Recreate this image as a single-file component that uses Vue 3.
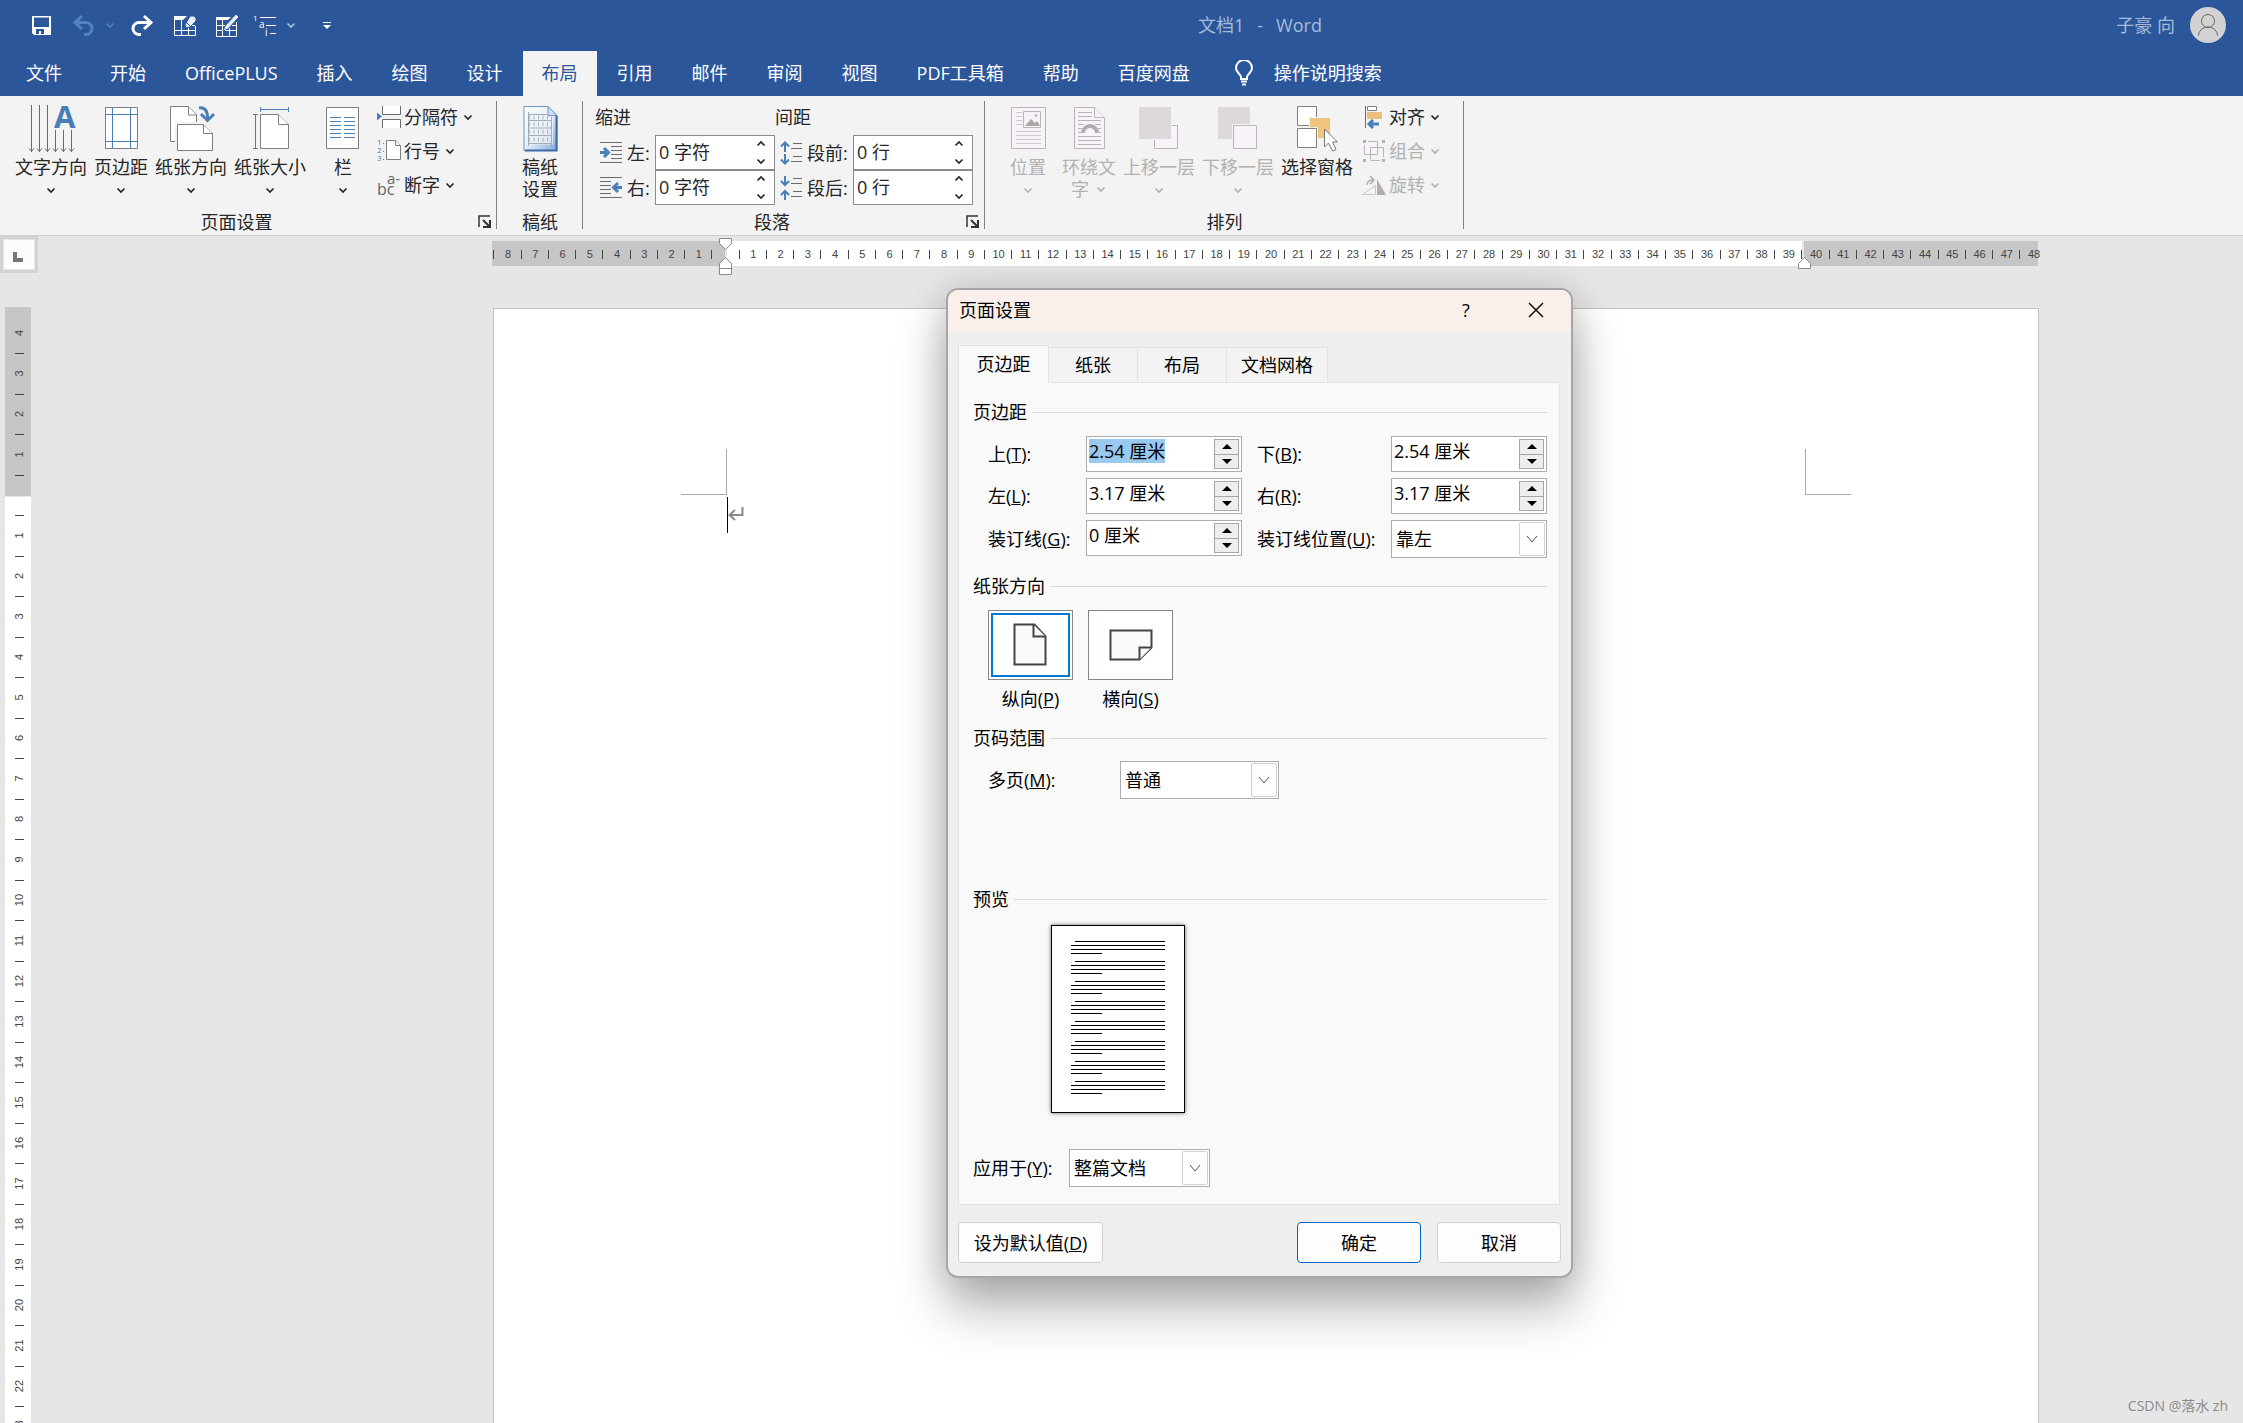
<script setup>
import { onMounted, ref } from 'vue'

const menuTabs = ['开始', 'OfficePLUS', '插入', '绘图', '设计', '布局', '引用', '邮件', '审阅', '视图', 'PDF工具箱', '帮助', '百度网盘']
const activeMenu = ref('布局')

const quickTools = [
  { icon: 'save', label: '保存', w: 24 },
  { icon: 'undo', label: '撤消', w: 24, dim: true },
  { icon: 'chev', label: '撤消列表', w: 12, dim: true },
  { icon: 'redo', label: '恢复', w: 24 },
  { icon: 'erase', label: '橡皮擦', w: 24 },
  { icon: 'pen', label: '绘制表格', w: 24 },
  { icon: 'list', label: '多级列表', w: 24 },
  { icon: 'chev', label: '列表选项', w: 12, soft: true },
  { icon: 'custom', label: '自定义', w: 12 }
]

// characters that are part of an icon: position, size, colour
const glyphs = {
  list: [
    { x: 0, y: 8, s: 8, c: '#fff', t: '1' },
    { x: 6, y: 15, s: 10, c: '#fff', t: 'a' },
    { x: 12, y: 23, s: 10, c: '#fff', t: 'i' }
  ],
  textdir: [{ x: 30, y: 28, s: 31, c: '#4a7fb5', t: 'A', w: 700 }],
  lines: [
    { x: 0, y: 6, s: 8, c: '#4a7fb5', t: '1' },
    { x: 0, y: 14, s: 8, c: '#4a7fb5', t: '2' },
    { x: 0, y: 22, s: 8, c: '#4a7fb5', t: '3' }
  ],
  hyphen: [
    { x: 0, y: 22, s: 16, c: '#666', t: 'bc' },
    { x: 10, y: 11, s: 15, c: '#666', t: 'a-' }
  ]
}

const pageButtons = [
  { icon: 'textdir', label: '文字方向' },
  { icon: 'margins', label: '页边距' },
  { icon: 'orient', label: '纸张方向' },
  { icon: 'size', label: '纸张大小' },
  { icon: 'columns', label: '栏', narrow: true }
]
const pageSmall = [
  { icon: 'breaks', label: '分隔符' },
  { icon: 'lines', label: '行号' },
  { icon: 'hyphen', label: '断字' }
]
const arrangeSmall = [
  { icon: 'align', label: '对齐' },
  { icon: 'group', label: '组合', off: true },
  { icon: 'rotate', label: '旋转', off: true }
]
const indent = [
  { id: 'ind-l', icon: 'indl', label: '左:', value: '0 字符' },
  { id: 'sp-b', icon: 'spb', label: '段前:', value: '0 行' },
  { id: 'ind-r', icon: 'indr', label: '右:', value: '0 字符' },
  { id: 'sp-a', icon: 'spa', label: '段后:', value: '0 行' }
]

const H_ORIGIN = 234
const H_UNIT = 1308 / 48
const hMarks = []
for (let i = -8; i <= 48; i++) {
  if (i !== 0) hMarks.push({ n: Math.abs(i), x: H_ORIGIN + i * H_UNIT })
}
const hTicks = []
for (let i = -9; i < 48; i++) {
  hTicks.push(Math.round(H_ORIGIN + (i + 0.5) * H_UNIT - 1))
}
const V_ORIGIN = 188
const V_UNIT = 81 / 2
const vMarks = []
for (let i = -4; i <= 23; i++) {
  if (i !== 0) vMarks.push({ n: Math.abs(i), y: V_ORIGIN + i * V_UNIT })
}
const vTicks = []
for (let i = -4; i < 23; i++) {
  vTicks.push(Math.round(V_ORIGIN + (i + 0.5) * V_UNIT))
}

const dialogTabs = ['页边距', '纸张', '布局', '文档网格']
const activeTab = ref('页边距')
const margins = [
  { id: 'm-top', label: '上', key: 'T', value: '2.54 厘米' },
  { id: 'm-bottom', label: '下', key: 'B', value: '2.54 厘米' },
  { id: 'm-left', label: '左', key: 'L', value: '3.17 厘米' },
  { id: 'm-right', label: '右', key: 'R', value: '3.17 厘米' },
  { id: 'm-gutter', label: '装订线', key: 'G', value: '0 厘米' }
]
const orientation = ref('portrait')

onMounted(() => {
  const first = document.getElementById('m-top')
  first.focus({ preventScroll: true })
  first.select()
})
</script>

<template>
  <div class="app">
    <svg class="defs" aria-hidden="true">
      <defs>
        <linearGradient id="sheet" x1="0" y1="0" x2="1" y2="1">
          <stop offset="0" stop-color="#fff" />
          <stop offset="0.5" stop-color="#e6eef9" />
          <stop offset="1" stop-color="#7ea6dc" />
        </linearGradient>
      </defs>
      <symbol id="i-chev" viewBox="0 0 12 12"><path d="M2.500 4.500L6 8l3.500-3.500" fill="none" stroke="currentColor" stroke-width="1.700" /></symbol>
      <symbol id="i-save" viewBox="0 0 24 24"><path fill-rule="evenodd" fill="#fff" d="M3 3h19v19H5l-2-2zM5 4.500v9.500h15V4.500zM7 16v5h3v-3h2v3h3v-5z" /></symbol>
      <symbol id="i-undo" viewBox="0 0 24 24"><path d="M4 9.500h11a6 6 0 0 1 0 12h-2M11 3l-7 6.500 7 6.500" fill="none" stroke="#5283c4" stroke-width="3" /></symbol>
      <symbol id="i-redo" viewBox="0 0 24 24"><path d="M21 9.500H9a6 6 0 0 0 0 12h2M14 3l7 6.500-7 6.500" fill="none" stroke="#fff" stroke-width="3" /></symbol>
      <symbol id="i-erase" viewBox="0 0 24 24">
        <path d="M1 3h13l-4 4H1z" fill="#fff" />
        <path d="M1.500 3v19.500h21V13M1 17.500h21M8.500 7v15M15.500 14v8M15 12.500h7" fill="none" stroke="#fff" />
        <path d="M17 3h4l2 2v3l-6 6-4 1-1-3z" fill="#e8eef8" stroke="#2b579a" />
        <path d="M13 9l4 4" stroke="#2b579a" />
      </symbol>
      <symbol id="i-pen" viewBox="0 0 24 24">
        <path d="M1 4h15l-3 3H1z" fill="#fff" />
        <path d="M1.500 4v19.500h20V9M1 12.500h9M1 17.500h20M7.500 7v16M14.500 15v8M17 12.500h4" fill="none" stroke="#fff" />
        <path d="M21 1l3 3L13 16l-5 2 2-5z" fill="#e8eef8" stroke="#2b579a" />
      </symbol>
      <symbol id="i-list" viewBox="0 0 24 24"><path d="M7 4.500h16M13 12.500h10M17 20.500h6" stroke="#fff" /></symbol>
      <symbol id="i-custom" viewBox="0 0 12 12"><path d="M2 3.500h8" stroke="#fff" /><path d="M2 6h8l-4 4z" fill="#fff" /></symbol>
      <symbol id="i-user" viewBox="0 0 36 36">
        <circle cx="18" cy="18" r="18" fill="#d2d2d2" />
        <circle cx="18" cy="14" r="6.500" fill="none" stroke="#666" />
        <path d="M8.500 28.500a9.500 8.500 0 0 1 19 0" fill="none" stroke="#666" />
      </symbol>
      <symbol id="i-bulb" viewBox="0 0 20 26">
        <path d="M7 19v-2c0-3-5-4-5-9a8 8 0 0 1 16 0c0 5-5 6-5 9v2z" fill="none" stroke="#fff" stroke-width="2" />
        <path d="M7 21.500h6M8 24.500h4" stroke="#fff" stroke-width="2" />
      </symbol>

      <symbol id="i-textdir" viewBox="0 0 54 56">
        <path class="g" d="M7.500 5v47M15.500 5v47M23.500 5v47M31.500 30v22M39.500 30v22M47.500 30v22" />
        <path class="g" d="M5 48.500l2.500 3 2.500-3M13 48.500l2.500 3 2.500-3M21 48.500l2.500 3 2.500-3M29 48.500l2.500 3 2.500-3M37 48.500l2.500 3 2.500-3M45 48.500l2.500 3 2.500-3" />
      </symbol>
      <symbol id="i-margins" viewBox="0 0 54 56">
        <path class="p" d="M11.500 7.500h32v41h-32z" />
        <path class="b" d="M18.500 8v40M36.500 8v40M12 14.500h31M12 41.500h31" />
      </symbol>
      <symbol id="i-orient" viewBox="0 0 54 56">
        <path class="p" d="M6.500 6.500h18l8 8v27h-26z" />
        <path class="p" d="M24.500 6.500v8.500h8" />
        <path d="M11 22h40v34H11z" fill="#f3f3f3" />
        <path class="p" d="M13.500 24.500h26l9 9v17h-35z" />
        <path class="p" d="M39.500 24.500v9h9" />
        <path d="M35 8c6-1 9 3 8.500 12M37 14l6.500 6.500L50 14" fill="none" stroke="#4a7fb5" stroke-width="3" />
      </symbol>
      <symbol id="i-size" viewBox="0 0 54 56">
        <path class="p" d="M17.500 14.500h18l10 10v24h-28z" />
        <path class="p" d="M35.500 14.500v10h10" />
        <path class="b" d="M17.500 9.500h28M17.500 7v5M45.500 7v5M12.500 14.500v34M10 14.500h5M10 48.500h5" />
      </symbol>
      <symbol id="i-columns" viewBox="0 0 54 56">
        <path class="p" d="M10.500 7.500h32v41h-32z" />
        <path class="b" d="M14 17.500h11M28 17.500h11M14 21.500h11M28 21.500h11M14 25.500h11M28 25.500h11M14 29.500h11M28 29.500h11M14 33.500h11M28 33.500h11M14 37.500h11M28 37.500h11" />
      </symbol>
      <symbol id="i-manuscript" viewBox="0 0 54 56">
        <path d="M11 6.500h24l9 9v35H11z" fill="url(#sheet)" stroke="#7393c4" />
        <path d="M43.500 16v34.500H12" fill="none" stroke="#3f68a8" stroke-width="2" />
        <path d="M35 6.500v9h9z" fill="#cfe0f5" stroke="#7393c4" />
        <path d="M14 11.500h20v6h6v27H14z" fill="#f1f3f7" opacity=".7" />
        <path d="M15.500 12v34M38.500 17v29M15 14.500h20M15 20.500h24M15 28h24M15 35.500h24M15 43.500h24" stroke="#a3acba" />
        <path d="M16 17.500h22M16 24.300h22M16 31.800h22M16 39.500h22" stroke="#a9b2bf" stroke-width="4" stroke-dasharray="1 3.500" />
      </symbol>
      <symbol id="i-breaks" viewBox="0 0 24 24">
        <path class="w" d="M6 1v8h18V1zM6 23v-9h18v9z" />
        <path class="g" d="M5.500 1v8.500h18V1M5.500 23v-8.500h18V23" />
        <path d="M0 7.500l5 4-5 4z" fill="#4a7fb5" />
      </symbol>
      <symbol id="i-lines" viewBox="0 0 24 24">
        <path class="p" d="M9.500 1.500h9l5 5v14h-14z" /><path class="p" d="M18.500 1.500v5h5" />
        <path d="M6 4.500h1M6 12.500h1M6 20.500h1" stroke="#4a7fb5" />
      </symbol>
      <symbol id="i-hyphen" viewBox="0 0 24 24"></symbol>
      <symbol id="i-indl" viewBox="0 0 24 24">
        <path class="g" d="M1 1.500h22M12 5.500h11M12 9.500h11M12 13.500h11M12 17.500h11M1 21.500h22" />
        <path class="ba" d="M1 11.500h8M5 7l4.500 4.500L5 16" />
      </symbol>
      <symbol id="i-indr" viewBox="0 0 24 24">
        <path class="g" d="M1 1.500h22M1 5.500h11M1 9.500h11M1 13.500h11M1 17.500h11M1 21.500h22" />
        <path class="ba" d="M23 11.500h-8M19 7l-4.500 4.500L19 16" />
      </symbol>
      <symbol id="i-spb" viewBox="0 0 24 24">
        <path class="g" d="M14 2.500h9M12 7.500h11M14 15.500h9M12 20.500h11" />
        <path class="bt" d="M6 11V1.500M2 5.500l4-4 4 4M6 13v9.500M2 18.500l4 4 4-4" />
      </symbol>
      <symbol id="i-spa" viewBox="0 0 24 24">
        <path class="g" d="M14 2.500h9M12 7.500h11M14 15.500h9M12 20.500h11" />
        <path class="bt" d="M6 0v9M2 5l4 4 4-4M6 24v-9M2 19l4-4 4 4" />
      </symbol>

      <symbol id="i-position" viewBox="0 0 54 56">
        <path class="d" d="M10.500 7.500h34v41h-34z" />
        <path class="dl" d="M15 12.500h6M15 16.500h6M15 20.500h6M15 24.500h6M15 31.500h25M15 35.500h25M15 39.500h25M15 43.500h25" />
        <path class="d" d="M22.500 11.500h17v16h-17z" />
        <path d="M24 26l6-7 4 4 2-2 3 5z" fill="#aaa6aa" /><circle cx="35" cy="15.500" r="1.500" fill="#c0bcc0" />
      </symbol>
      <symbol id="i-wrap" viewBox="0 0 54 56">
        <path class="d" d="M12.500 7.500h20l10 10v31h-30z" /><path class="d" d="M32.500 7.500v10h10" />
        <path class="g2" d="M16 12.500h14M16 16.500h14M16 20.500h23M16 24.500h6M33 24.500h6M16 28.500h4M35 28.500h4M16 32.500h3M36 32.500h3M16 36.500h23M16 40.500h23M16 44.500h23" />
        <path d="M21 33a7 7 0 0 1 14 0" fill="none" stroke="#b0acb0" stroke-width="4" />
      </symbol>
      <symbol id="i-forward" viewBox="0 0 54 56">
        <path class="d" d="M22.500 25.500h23v23h-23z" />
        <path d="M6 6h34v34H6z" fill="#f3f3f3" /><path d="M7 7h32v32H7z" fill="#dcd8dc" />
      </symbol>
      <symbol id="i-backward" viewBox="0 0 54 56">
        <path d="M7 7h32v32H7z" fill="#dcd8dc" /><path d="M21 24h26v26H21z" fill="#f3f3f3" />
        <path class="d" d="M22.500 25.500h23v23h-23z" />
      </symbol>
      <symbol id="i-select" viewBox="0 0 54 56">
        <path class="p" d="M7.500 6.500h19v19h-19z" />
        <path d="M19 17h22v21H19z" fill="#f3f3f3" /><path d="M20 18h20v20H28V27h-8z" fill="#edc57c" />
        <path class="p" d="M7.500 28.500h19v19h-19z" />
        <path d="M34.500 29v18l4-4 4 8 3.500-1.500-3.500-7.500h5z" fill="#fff" stroke="#777" />
      </symbol>
      <symbol id="i-align" viewBox="0 0 24 24">
        <path class="g" d="M3.500 1v22" /><path class="p" d="M5.500 1.500h9v4h-9z" />
        <path d="M5 7h15v7H5z" fill="#e8c07a" /><path class="ba" d="M17 19H7M11 15l-4 4 4 4" />
      </symbol>
      <symbol id="i-group" viewBox="0 0 24 24">
        <path d="M1 1h3v3H1zM20 1h3v3h-3zM1 20h3v3H1zM20 20h3v3h-3z" fill="#b5b1b5" />
        <path class="d" d="M6 2.500h9.500v13h-13V6" /><path class="d2" d="M8.500 8.500h13V18M18 21.500H8.500v-13" />
      </symbol>
      <symbol id="i-rotate" viewBox="0 0 24 24">
        <path d="M.5 21.500h13v-9z" fill="#f7f3f8" stroke="#c9c5c9" /><path d="M15 6v16h9z" fill="#b0acb0" />
        <path d="M5 12c0-4 2-5 6-5M8 3l4 4-4 4" fill="none" stroke="#b0acb0" stroke-width="1.500" />
      </symbol>
      <symbol id="i-launch" viewBox="0 0 14 14">
        <path d="M1 12V1h11" fill="none" stroke="#333" stroke-width="1.500" />
        <path d="M5 5l6 6M12 5v7H5" fill="none" stroke="#333" stroke-width="2" />
      </symbol>
      <symbol id="i-portrait" viewBox="0 0 36 44">
        <path d="M1.500 1.500h20l11 12v28h-31z" class="ob" /><path d="M20.500 1.500v12h12" class="ob" />
      </symbol>
      <symbol id="i-landscape" viewBox="0 0 44 32">
        <path d="M1.500 1.500h41v17l-12 12h-29z" class="ob" /><path d="M30.500 30.500v-12h12" class="ob" />
      </symbol>
    </svg>

    <header class="top">
      <div class="titlebar">
        <div class="quick">
          <button v-for="t in quickTools" :key="t.label" :aria-label="t.label" :class="{ dim: t.dim, soft: t.soft }">
            <svg :width="t.w" :height="t.w">
              <use :href="'#i-' + t.icon" />
              <text v-for="g in glyphs[t.icon]" :key="g.t" :x="g.x" :y="g.y" :font-size="g.s" :fill="g.c">{{ g.t }}</text>
            </svg>
          </button>
        </div>
        <div class="doc-title"><span>文档1</span><span>-</span><span>Word</span></div>
        <div class="user"><span>子豪 向</span><svg width="36" height="36"><use href="#i-user" /></svg></div>
      </div>
      <nav class="menu">
        <button class="file">文件</button>
        <button v-for="m in menuTabs" :key="m" :class="{ active: m === activeMenu }" @click="activeMenu = m">{{ m }}</button>
        <button class="tell"><svg width="20" height="26"><use href="#i-bulb" /></svg>操作说明搜索</button>
      </nav>
    </header>

    <section class="ribbon">
      <div class="rgroup g-page">
        <div class="rbody">
          <button v-for="b in pageButtons" :key="b.label" class="big" :class="{ narrow: b.narrow }">
            <svg width="54" height="56">
              <use :href="'#i-' + b.icon" />
              <text v-for="g in glyphs[b.icon]" :key="g.t" :x="g.x" :y="g.y" :font-size="g.s" :font-weight="g.w" :fill="g.c">{{ g.t }}</text>
            </svg>
            <span>{{ b.label }}</span>
            <svg class="chev" width="12" height="12"><use href="#i-chev" /></svg>
          </button>
          <div class="smalls">
            <button v-for="s in pageSmall" :key="s.label" class="small">
              <svg width="24" height="24">
                <use :href="'#i-' + s.icon" />
                <text v-for="g in glyphs[s.icon]" :key="g.t" :x="g.x" :y="g.y" :font-size="g.s" :fill="g.c">{{ g.t }}</text>
              </svg>{{ s.label }}
              <svg class="chev" width="12" height="12"><use href="#i-chev" /></svg>
            </button>
          </div>
        </div>
        <div class="rfoot"><span>页面设置</span><button aria-label="页面设置选项"><svg width="14" height="14"><use href="#i-launch" /></svg></button></div>
      </div>

      <div class="rgroup g-paper">
        <div class="rbody">
          <button class="big">
            <svg width="54" height="56"><use href="#i-manuscript" /></svg>
            <span>稿纸</span><span>设置</span>
          </button>
        </div>
        <div class="rfoot"><span>稿纸</span></div>
      </div>

      <div class="rgroup g-para">
        <div class="rbody">
          <h2>缩进</h2>
          <h2>间距</h2>
          <div v-for="f in indent" :key="f.id" class="field">
            <svg width="24" height="24"><use :href="'#i-' + f.icon" /></svg>
            <label :for="f.id">{{ f.label }}</label>
            <div class="rspin">
              <input :id="f.id" type="text" :value="f.value">
              <div>
                <button aria-label="增加"><svg class="up" width="12" height="12"><use href="#i-chev" /></svg></button>
                <button aria-label="减少"><svg width="12" height="12"><use href="#i-chev" /></svg></button>
              </div>
            </div>
          </div>
        </div>
        <div class="rfoot"><span>段落</span><button aria-label="段落选项"><svg width="14" height="14"><use href="#i-launch" /></svg></button></div>
      </div>

      <div class="rgroup g-arrange">
        <div class="rbody">
          <button class="big off slim">
            <svg width="54" height="56"><use href="#i-position" /></svg><span>位置</span>
            <svg class="chev" width="12" height="12"><use href="#i-chev" /></svg>
          </button>
          <button class="big off">
            <svg width="54" height="56"><use href="#i-wrap" /></svg><span>环绕文</span>
            <span class="inline">字<svg width="12" height="12"><use href="#i-chev" /></svg></span>
          </button>
          <button class="big off">
            <svg width="54" height="56"><use href="#i-forward" /></svg><span>上移一层</span>
            <svg class="chev" width="12" height="12"><use href="#i-chev" /></svg>
          </button>
          <button class="big off">
            <svg width="54" height="56"><use href="#i-backward" /></svg><span>下移一层</span>
            <svg class="chev" width="12" height="12"><use href="#i-chev" /></svg>
          </button>
          <button class="big">
            <svg width="54" height="56"><use href="#i-select" /></svg><span>选择窗格</span>
          </button>
          <div class="smalls">
            <button v-for="s in arrangeSmall" :key="s.label" class="small" :class="{ off: s.off }">
              <svg width="24" height="24"><use :href="'#i-' + s.icon" /></svg>{{ s.label }}
              <svg class="chev" width="12" height="12"><use href="#i-chev" /></svg>
            </button>
          </div>
        </div>
        <div class="rfoot"><span>排列</span></div>
      </div>
    </section>

    <main class="workspace">
      <aside class="side">
        <button class="tabstop" aria-label="制表符"><i></i></button>
        <svg class="vruler" width="28" height="1200">
          <rect x="1" y="0" width="26" height="189" fill="#c6c6c6" />
          <rect x="1" y="190" width="26" height="1010" fill="#fff" />
          <path v-for="y in vTicks" :key="y" :d="`M11 ${y + 0.5}h9`" stroke="#444" />
          <text v-for="m in vMarks" :key="m.y" :transform="`translate(19 ${m.y}) rotate(-90)`">{{ m.n }}</text>
        </svg>
      </aside>
      <div class="canvas">
        <div class="sheet-column">
          <svg class="hruler" width="1550" height="40">
            <rect x="0" y="5" width="233" height="25" fill="#c6c6c6" />
            <rect x="235" y="5" width="1075" height="25" fill="#fff" />
            <rect x="1312" y="5" width="234" height="25" fill="#c6c6c6" />
            <path v-for="x in hTicks" :key="x" :d="`M${x + 0.5} 14v9`" stroke="#444" />
            <text v-for="m in hMarks" :key="m.x" :x="m.x" y="22">{{ m.n }}</text>
            <path class="marker" d="M227.500 2.500h12v5l-6 6-6-6zM227.500 32.500v-5l6-6 6 6v11h-12zM227.500 32.500h12M1306.500 32.500v-5l6-6 6 6v5z" />
          </svg>
          <article class="page">
            <div class="corners"><i class="c-left"></i><i class="c-right"></i></div>
            <div class="line">
              <i class="caret"></i>
              <svg width="16" height="16"><path d="M14.500 0v8H1.500M7 3L1.500 8 7 13" fill="none" stroke="#8a8a8a" stroke-width="2" /></svg>
            </div>
          </article>
        </div>
      </div>
    </main>

    <section class="dialog" role="dialog" aria-labelledby="dlg-title">
      <header class="dlg-head">
        <h1 id="dlg-title">页面设置</h1>
        <button aria-label="帮助">?</button>
        <button aria-label="关闭"><svg width="16" height="16"><path d="M1 1l14 14M15 1L1 15" stroke="#111" stroke-width="1.500" /></svg></button>
      </header>
      <div class="dlg-body">
        <div class="dlg-tabs" role="tablist">
          <button v-for="t in dialogTabs" :key="t" role="tab" :class="{ on: t === activeTab }" @click="activeTab = t">{{ t }}</button>
        </div>
        <div class="panel">
          <h3>页边距</h3>
          <div class="margin-grid">
            <template v-for="m in margins" :key="m.id">
              <label :for="m.id">{{ m.label }}(<u>{{ m.key }}</u>):</label>
              <div class="spin">
                <input :id="m.id" type="text" :value="m.value">
                <div>
                  <button aria-label="增加"><svg width="10" height="5"><path d="M0 5l5-5 5 5z" /></svg></button>
                  <button aria-label="减少"><svg width="10" height="5"><path d="M0 0l5 5 5-5z" /></svg></button>
                </div>
              </div>
            </template>
            <label for="gutter-pos">装订线位置(<u>U</u>):</label>
            <div class="combo">
              <select id="gutter-pos"><option>靠左</option><option>靠上</option></select>
              <span><svg width="12" height="12"><path d="M1 3l5 6 5-6" /></svg></span>
            </div>
          </div>

          <h3>纸张方向</h3>
          <div class="orients">
            <button :class="{ on: orientation === 'portrait' }" @click="orientation = 'portrait'">
              <span class="thumb"><svg width="36" height="44"><use href="#i-portrait" /></svg></span>
              <span>纵向(<u>P</u>)</span>
            </button>
            <button :class="{ on: orientation === 'landscape' }" @click="orientation = 'landscape'">
              <span class="thumb"><svg width="44" height="32"><use href="#i-landscape" /></svg></span>
              <span>横向(<u>S</u>)</span>
            </button>
          </div>

          <h3>页码范围</h3>
          <div class="pages">
            <label for="multi">多页(<u>M</u>):</label>
            <div class="combo">
              <select id="multi"><option>普通</option><option>对称页边距</option></select>
              <span><svg width="12" height="12"><path d="M1 3l5 6 5-6" /></svg></span>
            </div>
          </div>

          <h3>预览</h3>
          <div class="preview">
            <div v-for="n in 8" :key="n" class="para"><i></i><i></i><i></i><i></i></div>
          </div>

          <div class="apply">
            <label for="apply-to">应用于(<u>Y</u>):</label>
            <div class="combo">
              <select id="apply-to"><option>整篇文档</option><option>插入点之后</option></select>
              <span><svg width="12" height="12"><path d="M1 3l5 6 5-6" /></svg></span>
            </div>
          </div>
        </div>
        <footer class="dlg-foot">
          <button class="default">设为默认值(<u>D</u>)</button>
          <button class="ok">确定</button>
          <button>取消</button>
        </footer>
      </div>
    </section>

    <div class="watermark">CSDN @落水 zh</div>
  </div>
</template>

<style>
body { margin: 0; overflow: hidden; }
</style>

<style scoped>
.app {
  position: relative;
  display: flex;
  flex-direction: column;
  height: 100vh;
  overflow: hidden;
  background: #e6e6e6;
  color: #262626;
  font: 18px/24px "Open Sans", "Noto Sans CJK SC", sans-serif;
}
* { box-sizing: border-box; }
button, input, select { font: inherit; color: inherit; margin: 0; padding: 0; border: 0; background: none; border-radius: 0; outline: 0; }
button { white-space: nowrap; }
svg { flex: none; }
h1, h2, h3 { margin: 0; font: inherit; }
.defs { position: absolute; width: 0; height: 0; }

.g { fill: none; stroke: #6b6b6b; }
.b { fill: none; stroke: #4a7fb5; }
.p { fill: #fff; stroke: #7f7f7f; }
.w { fill: #fff; }
.d { fill: #f7f3f8; stroke: #b8b4b8; }
.d2 { fill: none; stroke: #b8b4b8; }
.dl { fill: none; stroke: #cdc9cd; }
.g2 { fill: none; stroke: #b8b4b8; }
.ba { fill: none; stroke: #4a7fb5; stroke-width: 3; }
.bt { fill: none; stroke: #4a7fb5; stroke-width: 2; }
.ob { fill: #fafafa; stroke: #444; stroke-width: 2; }

/* title bar and tabs */
.top { background: #2b579a; color: #fff; }
.titlebar { display: grid; grid-template-columns: 1198fr 500fr 545fr; align-items: center; height: 51px; padding-bottom: 1px; }
.quick { display: grid; grid-template-columns: 42px 42px 12px 52px 34px 50px 25px 28px 43px; padding-left: 20px; }
.quick button { display: flex; justify-content: center; align-items: center; height: 36px; color: #fff; }
.quick .dim { color: #5283c4; }
.quick .soft { color: #aabfdf; }
.doc-title { display: flex; gap: 13px; color: #a7bbd9; }
.user { display: flex; justify-content: flex-end; align-items: center; gap: 15px; padding-right: 17px; color: #a7bbd9; }
.menu { display: flex; gap: 1px; height: 45px; }
.menu button { padding: 0 19px 2px; }
.menu .file { padding: 0 28px 2px 26px; }
.menu .active { background: #f3f3f3; color: #2b579a; }
.menu .tell { display: flex; align-items: center; gap: 20px; padding-left: 24px; }

/* ribbon */
.ribbon { display: flex; flex: none; height: 140px; background: #f3f3f3; border-bottom: 1px solid #cfcfcf; }
.rgroup { position: relative; display: flex; flex-direction: column; padding-top: 4px; }
.rgroup::after { content: ""; position: absolute; right: 0; top: 5px; bottom: 6px; width: 1px; background: #808080; }
.rbody { display: flex; gap: 7px; height: 108px; }
.g-page { width: 497px; }
.g-page .rbody { padding-left: 15px; }
.g-paper { width: 86px; }
.g-paper .rbody { justify-content: center; }
.g-para { width: 402px; }
.g-arrange { width: 479px; }
.g-arrange .rbody { padding-left: 16px; }
.big { display: flex; flex-direction: column; align-items: center; justify-content: flex-start; }
.big span { line-height: 22px; }
.big .chev { margin-top: 6px; }
.big .inline { display: flex; align-items: center; gap: 6px; line-height: 22px; }
.narrow { width: 60px; }
.slim { width: 54px; }
.off { color: #b1b1b1; }
.smalls { display: flex; flex-direction: column; align-items: flex-start; }
.g-page .smalls { margin-left: -3px; }
.g-arrange .smalls { margin-left: 2px; }
.small { display: flex; align-items: center; gap: 3px; height: 34px; padding-bottom: 1px; }
.small .chev { margin-left: 1px; }
.rfoot { display: flex; align-items: center; height: 27px; }
.rfoot span { flex: 1; text-align: center; }
.rfoot button { display: flex; width: 24px; padding-left: 5px; }

.g-para .rbody { display: grid; grid-template-columns: 180px 198px; grid-template-rows: 35px 35px 35px; gap: 0; padding-left: 12px; }
.g-para h2 { align-self: center; padding-bottom: 2px; }
.field { display: flex; align-items: center; gap: 4px; padding-left: 4px; }
.field label { flex: 1; }
.rspin { display: flex; width: 120px; height: 35px; background: #fff; border: 1px solid #8c8c8c; }
.rspin input { flex: 1; min-width: 0; padding: 0 0 1px 3px; }
.rspin > div { display: flex; flex-direction: column; justify-content: center; width: 26px; gap: 5px; }
.rspin button { display: flex; justify-content: center; }
.up { transform: rotate(180deg); }

/* rulers and page */
.workspace { display: flex; flex: 1; min-height: 0; overflow: hidden; }
.side { display: flex; flex-direction: column; width: 38px; }
.tabstop { display: flex; flex: none; width: 38px; height: 37px; padding: 3px; background: #d3d3d3; }
.tabstop i { flex: 1; align-self: stretch; background: linear-gradient(#777, #777) 9px 12px / 4px 10px no-repeat, linear-gradient(#777, #777) 9px 18px / 10px 4px no-repeat, #fcfcfc; border: 1px solid #e6e6e6; }
.vruler { margin: 34px 0 0 4px; }
.vruler text, .hruler text { font: 11px "Liberation Sans", sans-serif; fill: #444; text-anchor: middle; }
.canvas { display: grid; grid-template-columns: 454fr 1547px 204fr; flex: 1; min-width: 0; }
.sheet-column { grid-column: 2; display: flex; flex-direction: column; }
.hruler { overflow: visible; height: 40px; }
.marker { fill: #fff; stroke: #8a8a8a; }
.page { flex: 1; margin: 32px 0 0 1px; min-height: 1115px; padding: 140px 187px 0; background: #fff; border: 1px solid #c4c4c4; border-bottom: 0; }
.corners { display: flex; justify-content: space-between; }
.corners i { width: 46px; height: 46px; border: 0 solid #aaa; border-bottom-width: 1px; }
.corners .c-left { border-right-width: 1px; }
.corners .c-right { border-left-width: 1px; }
.line { display: flex; align-items: center; padding: 2px 0 0 46px; height: 38px; }
.caret { width: 1px; height: 36px; background: #000; }

/* dialog window */
.dialog {
  position: absolute; left: 946px; top: 288px; width: 627px;
  border: 2px solid #a6a6a6; border-radius: 12px; overflow: hidden;
  background: #efefef; color: #000;
  box-shadow: 0 30px 50px rgba(0, 0, 0, .3), 0 0 36px rgba(0, 0, 0, .14);
}
.dlg-head { display: flex; align-items: center; height: 42px; padding: 0 0 2px 11px; background: #f9f0eb; }
.dlg-head h1 { flex: 1; }
.dlg-head button { display: flex; justify-content: center; width: 70px; }
.dlg-body { padding: 13px 10px; }
.dlg-tabs { display: flex; align-items: flex-end; height: 38px; margin-bottom: -1px; }
.dlg-tabs button { position: relative; width: 89px; height: 36px; background: #f3f3f3; border: 1px solid #e3e3e3; border-left-width: 0; }
.dlg-tabs button:last-child { width: 101px; }
.dlg-tabs .on { width: 91px; height: 38px; background: #f9f9f9; border-left-width: 1px; border-bottom-color: #f9f9f9; }
.panel { width: 602px; padding: 17px 12px 17px 14px; background: #f9f9f9; border: 1px solid #e3e3e3; }
h3 { display: flex; align-items: center; gap: 5px; }
h3::after { content: ""; flex: 1; height: 1px; background: #dadada; }
.margin-grid { display: grid; grid-template-columns: 98px 156px 149px 156px; grid-template-rows: 36px 36px 38px; row-gap: 6px; padding: 12px 0 16px 15px; align-items: start; }
.margin-grid label { align-self: center; white-space: nowrap; }
.margin-grid label:nth-of-type(even) { padding-left: 15px; }
.spin { display: flex; height: 36px; padding: 2px; background: #fff; border: 1px solid #abadb3; }
.spin input { flex: 1; min-width: 0; height: 24px; }
.spin input::selection { background: #99c9ef; color: #000; }
.spin > div { display: flex; flex-direction: column; width: 25px; }
.spin button { display: flex; flex: 1; align-items: center; justify-content: center; background: #eee; border: 1px solid #a6a6a6; }
.spin button + button { border-top-width: 0; }
.combo { position: relative; display: flex; height: 38px; background: #fff; border: 1px solid #abadb3; }
.combo select { flex: 1; min-width: 0; padding-left: 4px; appearance: none; }
.combo span { position: absolute; right: 1px; top: 1px; bottom: 1px; display: flex; align-items: center; justify-content: center; width: 26px; background: #fdfdfd; border: 1px solid #d0d0d0; border-radius: 2px; pointer-events: none; }
.combo path { fill: none; stroke: #555; }
.orients { display: flex; gap: 15px; padding: 12px 0 15px 15px; }
.orients button { display: flex; flex-direction: column; gap: 7px; align-items: center; }
.thumb { display: flex; align-items: center; justify-content: center; width: 85px; height: 70px; background: #fff; border: 1px solid #83868f; }
.on .thumb { box-shadow: inset 0 0 0 2px #fff, inset 0 0 0 4px #0078d7; }
.pages { display: flex; align-items: center; padding: 11px 0 88px 15px; }
.pages label { width: 132px; }
.pages .combo { width: 159px; }
.preview { width: 134px; height: 188px; margin: 14px 0 36px 78px; padding: 15px 19px; background: #fff; border: 1px solid #000; box-shadow: 0 0 4px rgba(0, 0, 0, .6); }
.para { display: flex; flex-direction: column; gap: 3px; height: 20px; }
.para i { height: 1px; background: #000; }
.para i:first-child { margin-left: 4px; }
.para i:last-child { width: 31px; }
.apply { display: flex; align-items: center; }
.apply label { width: 96px; }
.apply .combo { width: 141px; }
.dlg-foot { display: flex; gap: 16px; padding-top: 17px; }
.dlg-foot button { width: 124px; height: 41px; background: #fdfdfd; border: 1px solid #d0d0d0; border-radius: 4px; }
.dlg-foot .default { width: 145px; margin-right: auto; }
.dlg-foot .ok { border-color: #0067c0; }

.watermark { position: absolute; right: 15px; bottom: 5px; color: #8c8c8c; font-size: 14px; }
</style>
